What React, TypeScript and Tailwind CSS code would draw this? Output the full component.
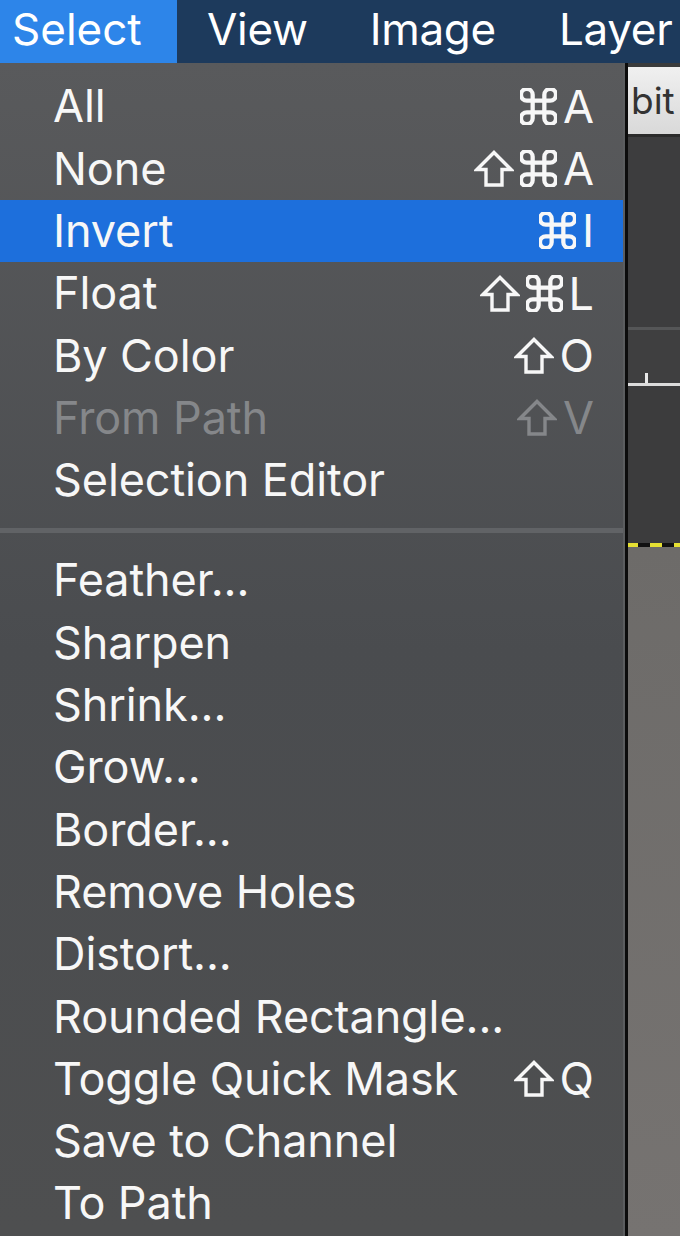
import React from "react";

const Cmd = () => (
  <svg width="37" height="37" viewBox="2.5 2.5 19 19" fill="none" stroke="currentColor" strokeWidth="2.2" strokeLinecap="round" strokeLinejoin="round" className="shrink-0">
    <path d="M15 6v12a3 3 0 1 0 3-3H6a3 3 0 1 0 3 3V6a3 3 0 1 0-3 3h12a3 3 0 1 0-3-3" />
  </svg>
);

const Shift = () => (
  <svg width="40" height="37" viewBox="0 0 40 37" fill="none" stroke="currentColor" strokeWidth="3.4" strokeLinejoin="miter" className="shrink-0">
    <path d="M20 2.5 L37 19.5 H28 V35 H12 V19.5 H3 Z" />
  </svg>
);

type Item = { label: string; keys?: string[]; active?: boolean; disabled?: boolean };

const top: Item[] = [
  { label: "All", keys: ["cmd", "A"] },
  { label: "None", keys: ["shift", "cmd", "A"] },
  { label: "Invert", keys: ["cmd", "I"], active: true },
  { label: "Float", keys: ["shift", "cmd", "L"] },
  { label: "By Color", keys: ["shift", "O"] },
  { label: "From Path", keys: ["shift", "V"], disabled: true },
  { label: "Selection Editor" },
];

const bottom: Item[] = [
  { label: "Feather..." },
  { label: "Sharpen" },
  { label: "Shrink..." },
  { label: "Grow..." },
  { label: "Border..." },
  { label: "Remove Holes" },
  { label: "Distort..." },
  { label: "Rounded Rectangle..." },
  { label: "Toggle Quick Mask", keys: ["shift", "Q"] },
  { label: "Save to Channel" },
  { label: "To Path" },
];

function Row({ item }: { item: Item }) {
  const color = item.disabled ? "text-[#85878a]" : "text-[#f7f7f7]";
  return (
    <div
      className={`flex h-[62.3px] items-center justify-between pl-[53px] pr-[29px] ${
        item.active ? "bg-[#1d6fdc]" : ""
      } ${color}`}
    >
      <span className="tracking-[-0.1px]">{item.label}</span>
      {item.keys && (
        <span className="flex items-center gap-[6px]">
          {item.keys.map((k, i) =>
            k === "cmd" ? (
              <Cmd key={i} />
            ) : k === "shift" ? (
              <Shift key={i} />
            ) : (
              <span key={i} className="leading-none">{k}</span>
            )
          )}
        </span>
      )}
    </div>
  );
}

export default function App() {
  return (
    <div
      className="flex h-[1236px] w-[680px] flex-col overflow-hidden bg-[#4b4d4f]"
      style={{ fontFamily: "Inter, 'Noto Sans', 'Liberation Sans', sans-serif" }}
    >
      {/* menu bar */}
      <div className="flex h-[63px] shrink-0 items-center bg-[#1d3a5c] text-[44px] leading-none text-white whitespace-nowrap">
        <div className="flex h-full w-[177px] items-center bg-[#2d85e9] pb-[6px] pl-[12px] tracking-[0px]">Select</div>
        <div className="pb-[6px] pl-[30px] tracking-[-0.3px]">View</div>
        <div className="pb-[6px] pl-[62px] tracking-[-0.3px]">Image</div>
        <div className="pb-[6px] pl-[63px] tracking-[-0.3px]">Layer</div>
      </div>

      <div className="flex flex-1">
        {/* menu */}
        <div className="flex w-[625px] shrink-0 flex-col border-r-[2px] border-[#5b5d5f] bg-gradient-to-b from-[#595a5c] via-[#4a4c4f] to-[#4e4f50] text-[45px] whitespace-nowrap">
          <div className="h-[12px]" />
          {top.map((it) => (
            <Row key={it.label} item={it} />
          ))}
          <div className="flex h-[38px] items-center">
            <div className="h-[5px] w-full bg-[#616366]" />
          </div>
          {bottom.map((it) => (
            <Row key={it.label} item={it} />
          ))}
        </div>
        <div className="w-[3px] shrink-0 bg-[#0c0c0c]" />

        {/* canvas area to the right */}
        <div className="flex flex-1 flex-col">
          <div className="h-[4px] bg-[#3a3b3c]" />
          <div className="flex h-[70px] items-center overflow-hidden border-b-[3px] border-[#2b2b2b] bg-gradient-to-b from-[#f0f0f0] to-[#d9d9d9] pl-[3px] text-[37px] leading-none text-[#333]">
            <span>bit</span>
          </div>
          <div className="h-[190px] bg-[#3d3d3e]" />
          <div className="h-[3px] bg-[#555657]" />
          <div className="relative h-[53px] bg-[#3f3f40]">
            <div className="absolute bottom-0 left-[17px] h-[10px] w-[3px] bg-[#e8e8e8]" />
          </div>
          <div className="h-[3px] bg-[#dcdcdc]" />
          <div className="h-[157px] bg-[#3c3c3d]" />
          <div className="flex h-[4px]">
            <div className="w-[10px] bg-[#e6e033]" />
            <div className="w-[12px] bg-[#111]" />
            <div className="w-[12px] bg-[#e6e033]" />
            <div className="w-[12px] bg-[#111]" />
            <div className="flex-1 bg-[#e6e033]" />
          </div>
          <div className="flex-1 bg-gradient-to-b from-[#6d6b69] to-[#767371]" />
        </div>
      </div>
    </div>
  );
}
